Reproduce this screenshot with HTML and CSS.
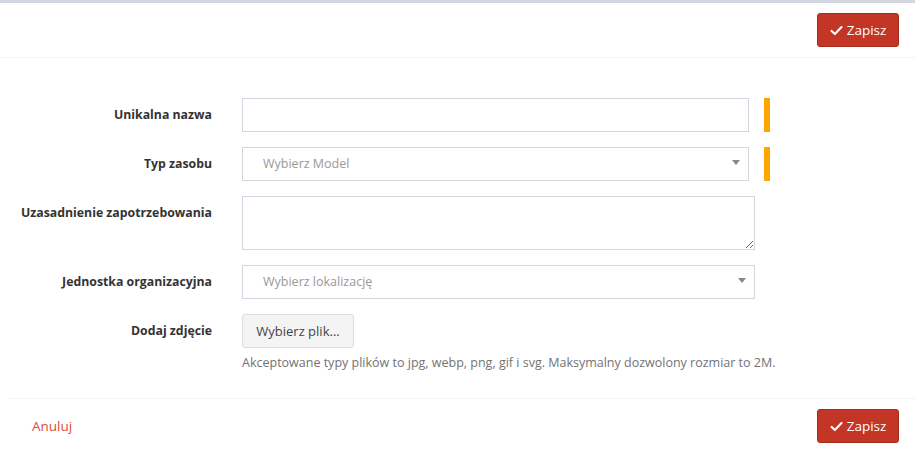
FILE: index.html
```html
<!DOCTYPE html>
<html lang="pl">
<head>
<meta charset="utf-8">
<title>Formularz</title>
<link rel="stylesheet" href="styles.css">
</head>
<body>
<div class="box">
  <div class="box-header">
    <button class="btn-save" type="button">
      <svg class="check" viewBox="0 0 16 16" width="13" height="13"><path d="M2 8.6 L6 12.4 L14.2 3.8" fill="none" stroke="#fff" stroke-width="2.6" stroke-linecap="round" stroke-linejoin="round"/></svg>
      <span>Zapisz</span>
    </button>
  </div>
  <form class="box-body">
    <div class="form-group">
      <label class="control-label">Unikalna nazwa</label>
      <div class="controls">
        <input class="form-control w-short" type="text">
        <span class="required-bar"></span>
      </div>
    </div>
    <div class="form-group">
      <label class="control-label">Typ zasobu</label>
      <div class="controls">
        <div class="select w-short"><span class="placeholder">Wybierz Model</span><span class="arrow"></span></div>
        <span class="required-bar"></span>
      </div>
    </div>
    <div class="form-group">
      <label class="control-label">Uzasadnienie zapotrzebowania</label>
      <div class="controls">
        <textarea class="form-control textarea w-long"></textarea>
      </div>
    </div>
    <div class="form-group">
      <label class="control-label">Jednostka organizacyjna</label>
      <div class="controls">
        <div class="select w-long"><span class="placeholder">Wybierz lokalizację</span><span class="arrow"></span></div>
      </div>
    </div>
    <div class="form-group last">
      <label class="control-label">Dodaj zdjęcie</label>
      <div class="controls col">
        <button class="btn-file" type="button">Wybierz plik...</button>
        <p class="help-block">Akceptowane typy plików to jpg, webp, png, gif i svg. Maksymalny dozwolony rozmiar to 2M.</p>
      </div>
    </div>
  </form>
  <div class="box-footer">
    <a class="link-cancel" href="#">Anuluj</a>
    <button class="btn-save" type="button">
      <svg class="check" viewBox="0 0 16 16" width="13" height="13"><path d="M2 8.6 L6 12.4 L14.2 3.8" fill="none" stroke="#fff" stroke-width="2.6" stroke-linecap="round" stroke-linejoin="round"/></svg>
      <span>Zapisz</span>
    </button>
  </div>
</div>
</body>
</html>
```
FILE: styles.css
```css
* { box-sizing: border-box; }
html, body { margin: 0; padding: 0; background: #fff; }
body {
  font-family: "Open Sans", "Noto Sans", sans-serif;
  font-size: 12.5px;
  color: #333;
  line-height: 20px;
}
.box {
  border-top: 3px solid #d2d6de;
  background: #fff;
}
.box-header {
  display: flex;
  justify-content: flex-end;
  padding: 10px 16px 10px 10px;
  border-bottom: 1px solid #f4f4f4;
}
.btn-save {
  display: inline-flex;
  align-items: center;
  gap: 4px;
  height: 34px;
  width: 82px;
  justify-content: center;
  padding: 0 10px;
  background: #c33524;
  border: 1px solid #a82c1d;
  border-radius: 3px;
  color: #fff;
  font-family: inherit;
  font-size: 13.5px;
  cursor: pointer;
}
.check { display: block; }
.box-body {
  display: flex;
  flex-direction: column;
  gap: 15px;
  padding: 40px 0 25px;
  margin: 0;
}
.form-group {
  display: grid;
  grid-template-columns: 212px 1fr;
  column-gap: 30px;
  align-items: start;
}
.control-label {
  text-align: right;
  font-weight: 700;
  font-size: 12.3px;
  padding-top: 7px;
  color: #333;
  white-space: nowrap;
}
.controls {
  display: flex;
  align-items: stretch;
  gap: 15px;
}
.controls.col { flex-direction: column; align-items: flex-start; gap: 5px; }
.w-short { width: 507px; }
.w-long { width: 513px; }
.form-control {
  height: 34px;
  border: 1px solid #d2d6de;
  border-radius: 0;
  padding: 6px 12px;
  font-family: inherit;
  font-size: 13px;
  background: #fff;
  margin: 0;
}
.textarea { height: 54px; resize: vertical; display: block; }
.required-bar {
  width: 6px;
  background: #ffa500;
  display: block;
}
.select {
  height: 34px;
  border: 1px solid #d2d6de;
  display: flex;
  align-items: center;
  justify-content: space-between;
  padding: 0 8px 0 20px;
}
.placeholder { color: #999; }
.arrow {
  width: 0; height: 0;
  border-left: 4px solid transparent;
  border-right: 4px solid transparent;
  border-top: 5px solid #888;
  margin-top: -4px;
}
.btn-file {
  height: 34px;
  padding: 0 8px;
  background: #f4f4f4;
  border: 1px solid #ddd;
  border-radius: 3px;
  color: #444;
  font-family: inherit;
  font-size: 13px;
  width: 112px;
  white-space: nowrap;
}
.help-block {
  margin: 0;
  color: #737373;
}
.box-footer {
  display: flex;
  justify-content: space-between;
  align-items: center;
  margin-left: 9px;
  padding: 10px 16px 10px 23px;
  border-top: 1px solid #f4f4f4;
}
.link-cancel {
  color: #dd4b39;
  text-decoration: none;
  font-size: 13.5px;
}
```
